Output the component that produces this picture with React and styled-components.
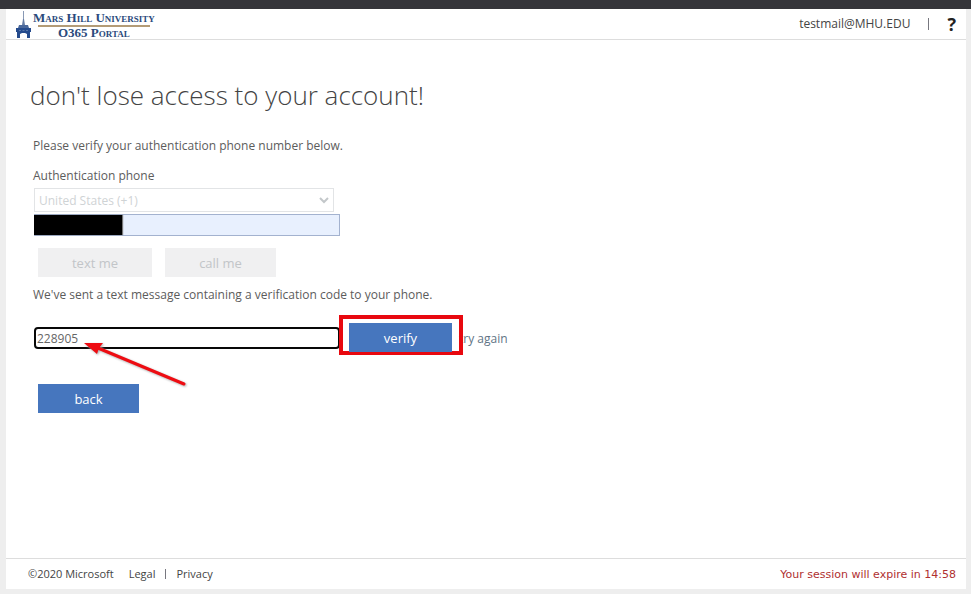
import React from "react";
import styled, { createGlobalStyle } from "styled-components";

const GlobalStyle = createGlobalStyle`
  * { box-sizing: border-box; }
  body {
    margin: 0;
    background: #eeeeee;
    color: #5c5c5c;
    font: 12px/16px "Open Sans", "Noto Sans", sans-serif;
  }
  button, input, select { font: inherit; }
`;

const Shell = styled.div`
  min-height: 100vh;
  display: flex;
  flex-direction: column;
  padding: 0 5px 5px 6px;
  border-top: 9px solid #35353a;
`;

const Page = styled.div`
  flex: 1;
  display: flex;
  flex-direction: column;
  background: #ffffff;
`;

const Header = styled.header`
  height: 31px;
  display: flex;
  align-items: center;
  justify-content: space-between;
  padding: 0 10px 0 9px;
  border-bottom: 1px solid #dddddd;
`;

const Brand = styled.a`
  display: flex;
  align-items: flex-end;
  gap: 1px;
  color: #2b4a7c;
  text-decoration: none;
`;

const BrandText = styled.span`
  display: flex;
  flex-direction: column;
  align-items: center;
  font: bold 13px/12px "Liberation Serif", serif;
  font-variant: small-caps;
  white-space: nowrap;
`;

const BrandRule = styled.span`
  width: 112px;
  height: 2px;
  margin-top: 1px;
  background: #b39b76;
`;

const Account = styled.div`
  display: flex;
  align-items: center;
  gap: 18px;
  color: #444444;
`;

const Divider = styled.span`
  width: 1px;
  height: ${(p) => p.$height}px;
  background: #77777f;
`;

const HelpButton = styled.button`
  padding: 0;
  border: 0;
  background: none;
  color: #222222;
  font-size: 18px;
  line-height: 20px;
  font-weight: 700;
`;

const Main = styled.main`
  flex: 1;
  padding: 35px 27px 20px;
`;

const Title = styled.h1`
  margin: 0 0 23px -3px;
  color: #444444;
  font-size: 26px;
  line-height: 40px;
  font-weight: 300;
`;

const Message = styled.p`
  margin: 0;
`;

const PhoneForm = styled.div`
  display: flex;
  flex-direction: column;
  align-items: flex-start;
  margin: 14px 0 10px;
`;

const SelectWrap = styled.div`
  position: relative;
  width: 300px;
  max-width: 100%;
  margin: 4px 0 2px 1px;

  svg {
    position: absolute;
    right: 5px;
    top: 8px;
    pointer-events: none;
  }
`;

const CountrySelect = styled.select`
  appearance: none;
  display: block;
  width: 100%;
  height: 24px;
  padding: 2px 4px 0;
  border: 1px solid #e2e4e6;
  border-radius: 0;
  background: #ffffff;
  color: #cfd3d5;
  opacity: 1;
`;

const FieldWrap = styled.div`
  position: relative;
  width: 306px;
  max-width: 100%;
  margin-left: 1px;
`;

const PhoneInput = styled.input`
  display: block;
  width: 100%;
  height: 22px;
  border: 1px solid #a3b2cf;
  background: #e8f0fe;
`;

const Redaction = styled.span`
  position: absolute;
  left: 0;
  top: 1px;
  width: 88px;
  height: 20px;
  background: #000000;
  box-shadow: 1px 0 1px #777777;
`;

const ButtonRow = styled.div`
  display: flex;
  gap: 13px;
  margin: 12px 0 0 5px;
`;

const Button = styled.button`
  width: ${(p) => p.$width}px;
  height: 29px;
  padding: 0;
  border: 0;
  background: #4676be;
  color: #ffffff;
  font-size: 13px;

  &:disabled {
    background: #f0f0f1;
    color: #c2c5c8;
  }
`;

const CodeForm = styled.div`
  display: flex;
  align-items: flex-end;
  margin-top: 12px;
`;

const CodeField = styled(FieldWrap)`
  margin-bottom: 6px;
`;

const CodeInput = styled.input`
  display: block;
  width: 100%;
  height: 22px;
  padding: 0 1px;
  border: 2px solid #080808;
  border-radius: 4px;
  outline: 0;
  background: #ffffff;
  color: #666666;
`;

const Arrow = styled.svg`
  position: absolute;
  left: 46px;
  top: 10px;
  filter: drop-shadow(1px 1px 1px #aaaaaa);
  pointer-events: none;
`;

const Highlight = styled.div`
  position: relative;
  z-index: 1;
  display: flex;
  margin: 0 -4px 0 -1px;
  padding: 4px 7px 0 6px;
  border: 4px solid #e8080f;
  height: 40px;
`;

const RetryLink = styled.a`
  margin-bottom: 8px;
  color: #5f7485;
  text-decoration: none;
`;

const BackRow = styled.div`
  margin: 29px 0 0 5px;
`;

const Footer = styled.footer`
  display: flex;
  align-items: center;
  justify-content: space-between;
  height: 31px;
  padding: 0 10px 0 22px;
  border-top: 1px solid #dddddd;
  font-size: 11px;
`;

const FooterLinks = styled.nav`
  display: flex;
  align-items: center;
  gap: 10px;
  color: #444444;

  a { color: inherit; text-decoration: none; }
`;

const Copyright = styled.span`
  margin-right: 5px;
`;

const Session = styled.span`
  padding-top: 1px;
  color: #b03030;
  font-family: "DejaVu Sans", sans-serif;
`;

const Tower = () => (
  <svg width="17" height="29" viewBox="0 0 17 29" aria-hidden="true">
    <path d="M8.500 1v13" stroke="#8999b5" strokeWidth="1" />
    <path d="M8 9h1l1 6H7z" fill="#667da5" />
    <path d="M4 15h9l1 3H3z" fill="#4a689b" />
    <path d="M1 18h15v4h-1v6h-3v-4l-2-1H7l-2 1v4H2v-6H1z" fill="#254b8d" />
    <path d="M4 20.500h2M7.500 20.500h2M11 20.500h2" stroke="#5877a9" />
  </svg>
);

export default function App() {
  return (
    <>
      <GlobalStyle />
      <Shell>
        <Page>
          <Header>
            <Brand href="#">
              <Tower />
              <BrandText>
                <span>Mars Hill University</span>
                <BrandRule />
                <span>O365 Portal</span>
              </BrandText>
            </Brand>
            <Account>
              <span>testmail@MHU.EDU</span>
              <Divider $height={12} />
              <HelpButton type="button">?</HelpButton>
            </Account>
          </Header>
          <Main>
            <Title>don't lose access to your account!</Title>
            <Message>Please verify your authentication phone number below.</Message>
            <PhoneForm>
              <label htmlFor="country">Authentication phone</label>
              <SelectWrap>
                <CountrySelect id="country" disabled>
                  <option>United States (+1)</option>
                </CountrySelect>
                <svg width="10" height="8" viewBox="0 0 10 8" fill="none" aria-hidden="true">
                  <path d="M1 2l4 4 4-4" stroke="#c3c7ca" strokeWidth="2" />
                </svg>
              </SelectWrap>
              <FieldWrap>
                <PhoneInput type="tel" aria-label="Phone number" />
                <Redaction />
              </FieldWrap>
              <ButtonRow>
                <Button type="button" $width={114} disabled>text me</Button>
                <Button type="button" $width={111} disabled>call me</Button>
              </ButtonRow>
            </PhoneForm>
            <Message>We've sent a text message containing a verification code to your phone.</Message>
            <CodeForm>
              <CodeField>
                <CodeInput type="text" defaultValue="228905" aria-label="Verification code" />
                <Arrow width="110" height="56" viewBox="0 0 110 56" aria-hidden="true">
                  <path d="M18 11L104 47" stroke="#ee0c12" strokeWidth="3" strokeLinecap="round" />
                  <path d="M4 6L23 6L19 11L17 17Z" fill="#ee0c12" />
                </Arrow>
              </CodeField>
              <Highlight>
                <Button type="button" $width={103}>verify</Button>
              </Highlight>
              <RetryLink href="#">try again</RetryLink>
            </CodeForm>
            <BackRow>
              <Button type="button" $width={101}>back</Button>
            </BackRow>
          </Main>
          <Footer>
            <FooterLinks>
              <Copyright>©2020 Microsoft</Copyright>
              <a href="#">Legal</a>
              <Divider $height={10} />
              <a href="#">Privacy</a>
            </FooterLinks>
            <Session>Your session will expire in 14:58</Session>
          </Footer>
        </Page>
      </Shell>
    </>
  );
}
